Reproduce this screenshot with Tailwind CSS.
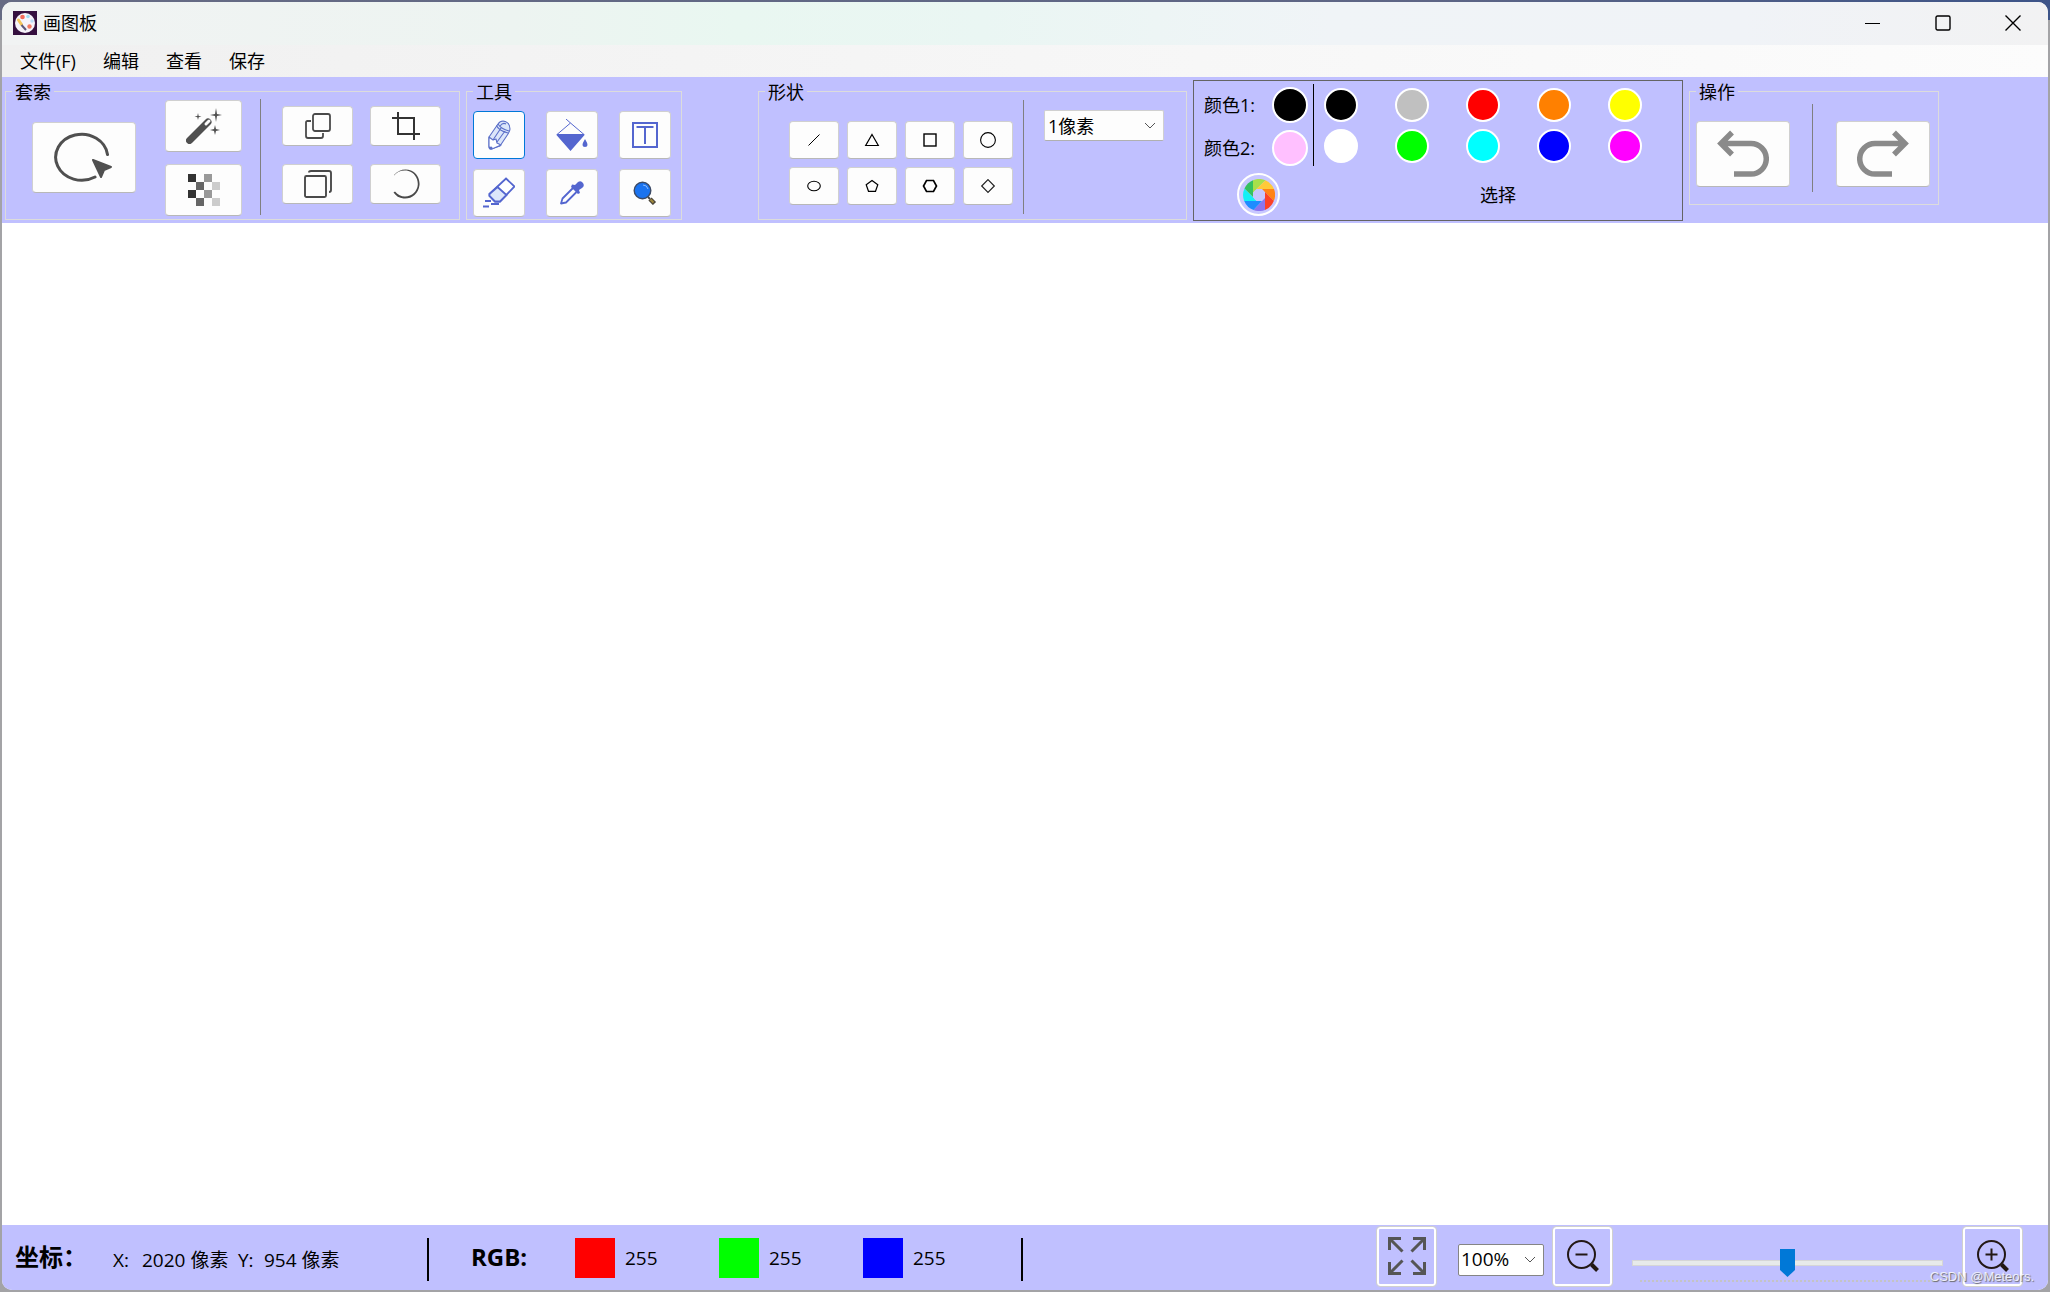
<!DOCTYPE html>
<html lang="zh-CN">
<head>
<meta charset="utf-8">
<title>画图板</title>
<script src="https://cdn.jsdelivr.net/npm/@tailwindcss/browser@4"></script>
</head>
<body class="min-h-screen flex flex-col p-0.5 bg-[#a3a3a6] bg-[linear-gradient(to_right,#666b84,#5d6585_70%,#3d5488)] bg-[length:100%_20px] bg-no-repeat font-['Open_Sans','Noto_Sans_CJK_SC',sans-serif] text-[18px] leading-6 text-black">
<div class="flex-1 flex flex-col rounded-[10px] overflow-hidden bg-white">

  <header class="h-[43px] shrink-0 flex items-center pl-[11px] pb-0.5 bg-[linear-gradient(to_right,#f1f3f3,#edf4f1_25%,#e9f7f1_36%,#eaf6f3_48%,#f0f4f7_65%,#f0f3f7_85%,#f2f2f3)]">
    <svg class="size-6" viewBox="0 0 24 24"><rect width="24" height="24" fill="#35103f"/><circle cx="12" cy="12" r="10" fill="#f6f3fa"/><circle cx="9.500" cy="6" r="2.300" fill="#f26a5a"/><circle cx="15" cy="5.500" r="1.800" fill="#9fdcf3"/><circle cx="19" cy="10" r="1.700" fill="#b9def8"/><circle cx="16.500" cy="15.500" r="2.200" fill="#f47a62"/><path d="M5.500 9l3 4.500" stroke="#f5c65c" stroke-width="3" stroke-linecap="round"/><path d="M8.500 14l4.500 5" stroke="#5c5878" stroke-width="2"/></svg>
    <h1 class="ml-1.5">画图板</h1>
    <div class="ml-auto flex pr-[27px] gap-[54px]">
      <button aria-label="最小化"><svg class="size-4" viewBox="0 0 16 16" stroke="#000"><path d="M0 8.500h15"/></svg></button>
      <button aria-label="最大化"><svg class="size-4" viewBox="0 0 16 16" fill="none" stroke="#000" stroke-width="1.400"><rect x="1" y="1" width="14" height="14" rx="1.500"/></svg></button>
      <button aria-label="关闭"><svg class="size-4" viewBox="0 0 16 16" stroke="#000" stroke-width="1.400"><path d="M.5 .5l15 15M15.500 .5l-15 15"/></svg></button>
    </div>
  </header>

  <nav class="h-8 shrink-0 flex items-center gap-[27px] pl-[18px] bg-linear-to-r from-[#f0f0f0] to-[#fcfcfc]">
    <button>文件(F)</button><button>编辑</button><button>查看</button><button>保存</button>
  </nav>

  <section class="h-[146px] shrink-0 flex items-start pl-[3px] pt-[5px] bg-[#c0c0ff]">
    <fieldset class="w-[455px] h-[138px] shrink-0 border border-[#dcdcdc]">
      <legend class="ml-1.5 px-[3px] pt-0.5 leading-4">套索</legend>
      <div class="flex items-center h-[115px] pl-[26px]">
        <button aria-label="套索选择" class="grid place-items-center w-[104px] h-[71px] rounded bg-[#fdfdfd] border border-[#d0d0d0] border-b-[#b8b8b8]">
          <svg class="w-[60px] h-[52px]" viewBox="0 0 60 52" fill="none"><path d="M53.500 22.500A26 23 0 1 0 41 45" stroke="#505050" stroke-width="3" stroke-linecap="round"/><path d="M39 28l18 7-7 3-3 7z" fill="#505050" stroke="#505050" stroke-width="2" stroke-linejoin="round"/></svg>
        </button>
        <div class="ml-[29px] flex flex-col gap-3">
          <button aria-label="魔棒" class="grid place-items-center w-[77px] h-[52px] rounded bg-[#fdfdfd] border border-[#d0d0d0] border-b-[#b8b8b8]">
            <svg class="size-9" viewBox="0 0 36 36"><path d="M3.500 32.500L22 14" stroke="#505050" stroke-width="7" stroke-linecap="round"/><path d="M20 16l3-3" stroke="#fdfdfd" stroke-width="3" stroke-linecap="round"/><path d="M30 0l1 6 5 1-5 1-1 6-1-6-5-1 5-1zM29 17l1 4 4 1-4 1-1 4-1-4-4-1 4-1zM12 5l.7 3 2.800.5-2.800.7L12 12l-.7-2.800-2.800-.7 2.800-.5z" fill="#505050"/></svg>
          </button>
          <button aria-label="透明选择" class="grid place-items-center w-[77px] h-[52px] rounded bg-[#fdfdfd] border border-[#d0d0d0] border-b-[#b8b8b8]">
            <svg class="size-8" viewBox="0 0 32 32"><path d="M0 0h8v8H0zM0 16h8v8H0z" fill="#333"/><path d="M8 8h8v8H8zM8 24h8v8H8z" fill="#666"/><path d="M16 0h8v8h-8zM16 16h8v8h-8z" fill="#999"/><path d="M24 8h8v8h-8zM24 24h8v8h-8z" fill="#ccc"/></svg>
          </button>
        </div>
        <div class="ml-[18px] mb-0.5 w-px h-[116px] bg-[#808080]"></div>
        <div class="ml-[21px] mb-1.5 grid grid-cols-[71px_71px] auto-rows-[40px] gap-x-[17px] gap-y-[18px]">
          <button aria-label="复制" class="grid place-items-center rounded bg-[#fdfdfd] border border-[#d0d0d0] border-b-[#b8b8b8]"><svg class="size-[26px]" viewBox="0 0 26 26" fill="none" stroke="#4a4a4a" stroke-width="1.800"><rect x="8" y="1" width="17" height="17" rx="2"/><path d="M6 8H2.500Q1 8 1 9.500V23q0 2 2 2h13q2 0 2-2v-3"/></svg></button>
          <button aria-label="裁剪" class="grid place-items-center rounded bg-[#fdfdfd] border border-[#d0d0d0] border-b-[#b8b8b8]"><svg class="size-7" viewBox="0 0 28 28" fill="none" stroke="#333" stroke-width="2"><path d="M6 0v22h22M0 6h22v22"/></svg></button>
          <button aria-label="粘贴" class="grid place-items-center rounded bg-[#fdfdfd] border border-[#d0d0d0] border-b-[#b8b8b8]"><svg class="size-7" viewBox="0 0 28 28" fill="none" stroke="#4a4a4a" stroke-width="1.900"><rect x="1" y="6" width="21" height="21" rx="1.500"/><path d="M5 2.500Q5 1 7 1h18q2 0 2 2v17q0 2-2 2"/></svg></button>
          <button aria-label="旋转" class="grid place-items-center rounded bg-[#fdfdfd] border border-[#d0d0d0] border-b-[#b8b8b8]"><svg class="size-[30px]" viewBox="0 0 30 30" fill="#4a4a4a"><path d="M3 6C7 1 14-1 20 1.500C26 4 29 10 28.500 16C27.500 25 20 30.500 12.500 29.500C8 29 5 27 2.500 23.500L4 22.500C7 26 10 27.500 14 27.500C21 27.500 26.500 22 26.800 15.500C27 9 23 3.500 17.500 2C12 .5 6 2.500 3 6.500z"/></svg></button>
        </div>
      </div>
    </fieldset>

    <fieldset class="ml-1.5 w-[216px] h-[138px] shrink-0 border border-[#dcdcdc]">
      <legend class="ml-1.5 px-[3px] pt-0.5 leading-4">工具</legend>
      <div class="grid grid-cols-[52px_52px_52px] auto-rows-[48px] gap-x-[21px] gap-y-2.5 pl-1.5 pt-[11px]">
        <button aria-label="铅笔" class="grid place-items-center rounded bg-[#fdfdfd] border border-[#0078d7]"><svg class="size-[30px]" viewBox="0 0 30 30" fill="#dce6fa" stroke="#5b6fc8" stroke-width="1.100" stroke-linejoin="round"><path d="M5 17L14 4q2-3 5-3 7 1 7 8 0 2-2 5l-8 12-9 3q-2 0-2-2z"/><path d="M5 17l4 3 3-1 1 4 4 2-9 4q-3 0-3-3z" fill="#fff"/><path d="M12.500 5.500q2 5 11.500 7.500M14 4q3 5 11 7M9 20l8-12M13 22l8-11M16 6q3-4 6-2" fill="none"/><circle cx="7" cy="28" r="1" fill="#4a5fc4"/></svg></button>
        <button aria-label="填充" class="grid place-items-center rounded bg-[#fdfdfd] border border-[#d0d0d0] border-b-[#b8b8b8]"><svg class="size-8" viewBox="0 0 32 32" fill="#5466cf"><path d="M1 15.500L14.500 4 28 15.500zM10 0l4.500 4" fill="none" stroke="#5466cf" stroke-width="1"/><path d="M0 15.500h29L14.500 32zM29 20q5 8 0 8t0-8z"/></svg></button>
        <button aria-label="文字" class="grid place-items-center rounded bg-[#fdfdfd] border border-[#d0d0d0] border-b-[#b8b8b8]"><svg class="size-[26px]" viewBox="0 0 26 26" fill="none" stroke="#5466cf" stroke-width="2"><rect x="1" y="1" width="24" height="24"/><path d="M4.500 5h17M13 5v17"/></svg></button>
        <button aria-label="橡皮" class="grid place-items-center rounded bg-[#fdfdfd] border border-[#d0d0d0] border-b-[#b8b8b8]"><svg class="size-8" viewBox="0 0 32 32" fill="none" stroke="#5466cf" stroke-width="1.800"><path d="M23 1.500l8.500 8L17 24.500H12L6.500 19v-2z" fill="#fff"/><path d="M14.500 10l9 8-6.500 6.500H12L6.500 19v-2z" fill="#dce6fa"/><path d="M2 24h6M8 27h8M0 29.500h6"/></svg></button>
        <button aria-label="取色" class="grid place-items-center rounded bg-[#fdfdfd] border border-[#d0d0d0] border-b-[#b8b8b8]"><svg class="size-6" viewBox="0 0 24 24" fill="none" stroke="#5466cf" stroke-width="1.800"><path d="M13 7L2.500 17.500 1 22.500 6 21.500 16.500 11" stroke-linejoin="round"/><path d="M12 3.500L15 4l3-3q3-2 5 1t-1 5l-3 2 1 3-2 1-7-7z" fill="#5466cf" stroke="none"/></svg></button>
        <button aria-label="放大镜" class="grid place-items-center rounded bg-[#fdfdfd] border border-[#d0d0d0] border-b-[#b8b8b8]"><svg class="size-6" viewBox="0 0 24 24" fill="none"><path d="M15 16l2 2" stroke="#444" stroke-width="2"/><path d="M17 18l4.500 4.500" stroke="#4a453a" stroke-width="4.500"/><path d="M17.500 18.500l3 3" stroke="#a08a3c" stroke-width="2"/><circle cx="9.500" cy="9.500" r="8.300" fill="#1a73f0" stroke="#3b4a66" stroke-width="1.400"/><path d="M10 4q4 0 5 4" stroke="#8bbcff"/></svg></button>
      </div>
    </fieldset>

    <fieldset class="ml-[76px] w-[429px] h-[138px] shrink-0 border border-[#dcdcdc]">
      <legend class="ml-1.5 px-[3px] pt-0.5 leading-4">形状</legend>
      <div class="flex h-[115px] pl-[30px]">
        <div class="mt-[21px] grid grid-cols-[50px_50px_50px_50px] auto-rows-[38px] gap-2">
          <button aria-label="直线" class="grid place-items-center rounded bg-[#fdfdfd] border border-[#d0d0d0] border-b-[#b8b8b8]"><svg class="size-4" viewBox="0 0 16 16" stroke="#000"><path d="M2.500 13.500l11-11"/></svg></button>
          <button aria-label="三角形" class="grid place-items-center rounded bg-[#fdfdfd] border border-[#d0d0d0] border-b-[#b8b8b8]"><svg class="size-4" viewBox="0 0 16 16" fill="none" stroke="#000" stroke-width="1.200"><path d="M8 2.500l6.300 11H1.700z"/></svg></button>
          <button aria-label="矩形" class="grid place-items-center rounded bg-[#fdfdfd] border border-[#d0d0d0] border-b-[#b8b8b8]"><svg class="size-4" viewBox="0 0 16 16" fill="none" stroke="#000" stroke-width="1.400"><rect x="2" y="2" width="12" height="12"/></svg></button>
          <button aria-label="圆形" class="grid place-items-center rounded bg-[#fdfdfd] border border-[#d0d0d0] border-b-[#b8b8b8]"><svg class="size-4" viewBox="0 0 16 16" fill="none" stroke="#000" stroke-width="1.100"><circle cx="8" cy="8" r="7.400"/></svg></button>
          <button aria-label="椭圆" class="grid place-items-center rounded bg-[#fdfdfd] border border-[#d0d0d0] border-b-[#b8b8b8]"><svg class="size-4" viewBox="0 0 16 16" fill="none" stroke="#000" stroke-width="1.100"><ellipse cx="8" cy="8" rx="6.300" ry="4.800"/></svg></button>
          <button aria-label="五边形" class="grid place-items-center rounded bg-[#fdfdfd] border border-[#d0d0d0] border-b-[#b8b8b8]"><svg class="size-4" viewBox="0 0 16 16" fill="none" stroke="#000" stroke-width="1.200"><path d="M8 2.500l5.800 4.300-2.300 6.500h-7L2.200 6.800z"/></svg></button>
          <button aria-label="六边形" class="grid place-items-center rounded bg-[#fdfdfd] border border-[#d0d0d0] border-b-[#b8b8b8]"><svg class="size-4" viewBox="0 0 16 16" fill="none" stroke="#000" stroke-width="1.700"><path d="M4.500 2.500h7L14.500 8l-3 5.500h-7L1.500 8z"/></svg></button>
          <button aria-label="菱形" class="grid place-items-center rounded bg-[#fdfdfd] border border-[#d0d0d0] border-b-[#b8b8b8]"><svg class="size-4" viewBox="0 0 16 16" fill="none" stroke="#222" stroke-width="1.200"><path d="M8 1.700L14.300 8 8 14.300 1.700 8z"/></svg></button>
        </div>
        <div class="ml-2.5 w-px h-[114px] bg-[#808080]"></div>
        <div class="relative ml-5 mt-2.5 w-[120px] h-[31px]">
          <select aria-label="线宽" class="appearance-none w-full h-full pl-[3px] leading-6 bg-[#fdfdfd] border border-[#d0d0d0] border-b-[#b0b0b0] rounded-xs"><option>1像素</option></select>
          <svg class="absolute right-2 top-3 w-3 h-2 pointer-events-none" viewBox="0 0 12 8" fill="none" stroke="#555"><path d="M1 1l5 5 5-5"/></svg>
        </div>
      </div>
    </fieldset>

    <div class="ml-1.5 -mt-0.5 w-[490px] h-[141px] shrink-0 border border-[#646464]">
      <div class="flex pl-2.5">
        <div class="pt-1.5 flex flex-col gap-[7px]">
          <div class="flex items-center h-9 w-[104px] justify-between"><span>颜色1:</span><button aria-label="颜色1" class="size-9 rounded-full border-2 border-white bg-black"></button></div>
          <div class="flex items-center h-9 w-[104px] justify-between"><span>颜色2:</span><button aria-label="颜色2" class="size-9 rounded-full border-2 border-white bg-[#ffc0ff]"></button></div>
        </div>
        <div class="ml-[5px] mt-[3px] w-px h-[82px] bg-black"></div>
        <div class="ml-2.5 mt-[7px] grid grid-cols-[34px_34px_34px_34px_34px] auto-rows-[34px] gap-x-[37px] gap-y-[7px]">
          <button aria-label="黑色" class="rounded-full border-2 border-white bg-black"></button>
          <button aria-label="灰色" class="rounded-full border-2 border-white bg-[#c0c0c0]"></button>
          <button aria-label="红色" class="rounded-full border-2 border-white bg-[#ff0000]"></button>
          <button aria-label="橙色" class="rounded-full border-2 border-white bg-[#ff8000]"></button>
          <button aria-label="黄色" class="rounded-full border-2 border-white bg-[#ffff00]"></button>
          <button aria-label="白色" class="rounded-full border-2 border-white bg-white"></button>
          <button aria-label="绿色" class="rounded-full border-2 border-white bg-[#00ff00]"></button>
          <button aria-label="青色" class="rounded-full border-2 border-white bg-[#00ffff]"></button>
          <button aria-label="蓝色" class="rounded-full border-2 border-white bg-[#0000ff]"></button>
          <button aria-label="洋红" class="rounded-full border-2 border-white bg-[#ff00ff]"></button>
        </div>
      </div>
      <div class="flex items-center pl-[43px] mt-[7px]">
        <button aria-label="调色板" class="grid place-items-center size-[43px] rounded-full border-2 border-white bg-[#c8c8ff]">
          <svg class="size-8" viewBox="0 0 32 32"><path d="M10 1.200A16 16 0 0 1 22.500 1.300L10 13.500z" fill="#a8e04a"/><path d="M22.500 1.300A16 16 0 0 1 31 10H13.500z" fill="#ffca38"/><path d="M31 10A16 16 0 0 1 30.800 22L19 10z" fill="#ff8316"/><path d="M30.800 22A16 16 0 0 1 22 30.900V13z" fill="#fb4127"/><path d="M22 30.900A16 16 0 0 1 10.500 31L22 19z" fill="#8a75ee"/><path d="M10.500 31A16 16 0 0 1 1.200 22H19z" fill="#1f8cff"/><path d="M1.200 22A16 16 0 0 1 1.500 9.500L13.500 22z" fill="#13f0f5"/><path d="M1.500 9.500A16 16 0 0 1 10 1.200V18z" fill="#35c060"/><circle cx="16" cy="16" r="6" fill="#c6c6ff"/></svg>
        </button>
        <button class="ml-[200px]">选择</button>
      </div>
    </div>

    <fieldset class="ml-1.5 w-[250px] h-[123px] shrink-0 border border-[#dcdcdc]">
      <legend class="ml-1.5 px-[3px] pt-0.5 leading-4">操作</legend>
      <div class="flex items-start mt-1 pl-1.5">
        <button aria-label="撤销" class="mt-[17px] grid place-items-center w-[94px] h-[66px] rounded bg-[#fdfdfd] border border-[#d0d0d0] border-b-[#b8b8b8]"><svg class="w-[52px] h-12" viewBox="0 0 52 48" fill="none" stroke="#8a8a8a" stroke-width="5.500"><path d="M3.500 13.500H34a15.300 15.300 0 0 1 0 30.600H17M15 2.500l-11 11 11 11"/></svg></button>
        <div class="ml-[22px] w-px h-[88px] bg-[#808080]"></div>
        <button aria-label="重做" class="mt-[17px] ml-[23px] grid place-items-center w-[94px] h-[66px] rounded bg-[#fdfdfd] border border-[#d0d0d0] border-b-[#b8b8b8]"><svg class="w-[52px] h-12" viewBox="0 0 52 48" fill="none" stroke="#8a8a8a" stroke-width="5.500"><path d="M48.500 13.500H18a15.300 15.300 0 0 0 0 30.600H35M37 2.500l11 11-11 11"/></svg></button>
      </div>
    </fieldset>
  </section>

  <main class="flex-1 bg-white"></main>

  <footer class="relative h-[65px] shrink-0 flex items-center pl-[13px] pr-[25px] pb-[3px] bg-[#c0c0ff]">
    <strong class="w-[98px] mt-0.5 text-[24px] leading-8 whitespace-nowrap">坐标：</strong>
    <div class="flex w-[314px] mt-2 whitespace-pre text-[19px]"><span class="w-[29px]">X:</span><span class="w-24">2020 像素</span><span class="w-[26px]">Y:</span><span>954 像素</span></div>
    <div class="w-0.5 h-[43px] mt-1.5 bg-black"></div>
    <strong class="ml-[42px] w-[104px] mt-0.5 text-[24px] leading-8">RGB:</strong>
    <div class="flex items-center gap-2.5 w-36 mt-1"><span class="size-10 bg-[#ff0000]"></span><span class="text-[19px]">255</span></div>
    <div class="flex items-center gap-2.5 w-36 mt-1"><span class="size-10 bg-[#00ff00]"></span><span class="text-[19px]">255</span></div>
    <div class="flex items-center gap-2.5 w-[158px] mt-1"><span class="size-10 bg-[#0000ff]"></span><span class="text-[19px]">255</span></div>
    <div class="w-0.5 h-[43px] mt-1.5 bg-black"></div>

    <button aria-label="全屏" class="ml-auto grid place-items-center size-[61px] rounded border border-[#d0d0d0] bg-[#c0c0ff] shadow-[inset_0_0_0_2px_#fff]"><svg class="size-[38px]" viewBox="0 0 38 38" fill="none" stroke="#555" stroke-width="3"><path d="M13 1.500H1.500V13M2 2l12.500 12.500M25 1.500h11.500V13M36 2L23.500 14.500M13 36.500H1.500V25M2 36l12.500-12.500M25 36.500h11.500V25M36 36L23.500 23.500"/></svg></button>
    <div class="relative ml-[21px] mt-2 w-[86px] h-8">
      <select aria-label="缩放比例" class="appearance-none w-full h-full pl-0.5 pb-0.5 text-[19px] leading-6 bg-white border border-[#858585] rounded-xs"><option>100%</option></select>
      <svg class="absolute right-2 top-3 w-3 h-2 pointer-events-none" viewBox="0 0 12 8" fill="none" stroke="#555"><path d="M1 1l5 5 5-5"/></svg>
    </div>
    <button aria-label="缩小" class="ml-2 grid place-items-center size-[61px] rounded border border-[#d0d0d0] bg-[#c0c0ff] shadow-[inset_0_0_0_2px_#fff]"><svg class="size-8" viewBox="0 0 32 32" fill="none" stroke="#231815" stroke-width="2"><circle cx="14.500" cy="14.500" r="13.500"/><path d="M8.500 14.500h12"/><path d="M24.500 24.500l6 6" stroke-width="4"/></svg></button>
    <div class="relative ml-[19px] mt-[14px] w-[311px] h-7">
      <input type="range" aria-label="缩放" min="0" max="100" value="50" class="appearance-none block w-full h-7 bg-transparent [&::-webkit-slider-runnable-track]:h-1.5 [&::-webkit-slider-runnable-track]:bg-[#e7eaea] [&::-webkit-slider-runnable-track]:border [&::-webkit-slider-runnable-track]:border-[#d6d6d6] [&::-webkit-slider-thumb]:appearance-none [&::-webkit-slider-thumb]:w-[15px] [&::-webkit-slider-thumb]:h-7 [&::-webkit-slider-thumb]:-mt-3 [&::-webkit-slider-thumb]:bg-[#0078d7] [&::-webkit-slider-thumb]:[clip-path:polygon(0_0,100%_0,100%_75%,50%_100%,0_75%)]">
      <div class="absolute left-2 right-1.5 top-[31px] h-0.5 bg-[repeating-linear-gradient(to_right,#c4c4c4_0_2px,transparent_2px_4px)]"></div>
    </div>
    <button aria-label="放大" class="ml-[19px] grid place-items-center size-[61px] rounded border border-[#d0d0d0] bg-[#c0c0ff] shadow-[inset_0_0_0_2px_#fff]"><svg class="size-8" viewBox="0 0 32 32" fill="none" stroke="#231815" stroke-width="2"><circle cx="14.500" cy="14.500" r="13.500"/><path d="M8.500 14.500h12M14.500 8.500v12"/><path d="M24.500 24.500l6 6" stroke-width="4"/></svg></button>
    <span class="absolute right-3.5 bottom-[5px] font-['Liberation_Sans',sans-serif] text-[13px] leading-4 text-white/80 [text-shadow:1px_1px_1px_#666]">CSDN @Meteors.</span>
  </footer>
</div>
</body>
</html>
